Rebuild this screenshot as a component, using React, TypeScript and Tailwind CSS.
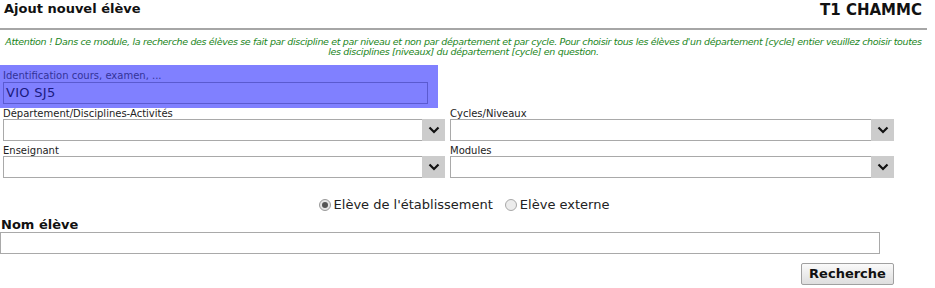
import React from "react";

function Chevron() {
  return (
    <svg width="12" height="8" viewBox="0 0 12 8" className="block">
      <path d="M1.5 1.5 L6 6 L10.5 1.5" fill="none" stroke="#111" strokeWidth="2.2" />
    </svg>
  );
}

function SelectBox({ label }: { label: string }) {
  return (
    <div className="flex flex-col">
      <span className="h-[11px] text-[10px] leading-[11px] text-[#222]">{label}</span>
      <div className="flex h-[22px] border border-r-0 border-[#a9a9a9] bg-white">
        <div className="flex-1" />
        <div className="-my-px flex w-[23px] items-center justify-center bg-[#cccccc]">
          <Chevron />
        </div>
      </div>
    </div>
  );
}

export default function App() {
  return (
    <div className="h-[288px] w-[935px] bg-white font-['DejaVu_Sans',sans-serif] text-[#111]">
      <div className="w-[927px]">
        {/* header */}
        <div className="flex h-[28px] items-start justify-between">
          <h1 className="pl-[4px] pt-[1px] text-[13px] font-bold leading-[16px]">Ajout nouvel élève</h1>
          <span className="pr-[5px] pt-[2px] text-[15px] font-bold leading-[17px]">T1 CHAMMC</span>
        </div>
        <div className="h-[2px] bg-[#a6a6a6]" />

        {/* notice */}
        <p className="mt-[7px] text-center text-[9.5px] italic leading-[10px] tracking-[-0.34px] text-[#1c861c]">
          Attention ! Dans ce module, la recherche des élèves se fait par discipline et par niveau et non par département et par cycle. Pour choisir tous les élèves d'un département [cycle] entier veuillez choisir toutes les disciplines [niveaux] du département [cycle] en question.
        </p>

        {/* identification */}
        <div className="mt-[8px] h-[43px] w-[438px] bg-[#8080ff] pl-[3px] pt-[5px]">
          <div className="text-[10px] leading-[12px] text-[#333399]">Identification cours, examen, ...</div>
          <div className="h-[22px] w-[425px] border border-[#5a5ad0] pl-[2px] text-[13px] leading-[20px] tracking-[0.3px] text-[#1a1a80]">
            VIO SJ5
          </div>
        </div>

        {/* selects */}
        <div className="grid w-[894px] grid-cols-[442px_444px] gap-x-[5px] gap-y-[4px] pl-[3px]">
          <SelectBox label="Département/Disciplines-Activités" />
          <SelectBox label="Cycles/Niveaux" />
          <SelectBox label="Enseignant" />
          <SelectBox label="Modules" />
        </div>

        {/* radios */}
        <div className="mt-[19px] flex items-center justify-center gap-[4px] pl-[1px] text-[13px] leading-[16px] text-[#222]">
          <label className="flex items-center gap-[3px]">
            <span className="flex h-[12px] w-[12px] items-center justify-center rounded-full border border-[#9a9a9a] bg-[#e6e6e6]">
              <span className="h-[6px] w-[6px] rounded-full bg-[#555]" />
            </span>
            Elève de l'établissement
          </label>
          <label className="ml-[8px] flex items-center gap-[3px]">
            <span className="h-[12px] w-[12px] rounded-full border border-[#a8a8a8] bg-[#ececec]" />
            Elève externe
          </label>
        </div>

        {/* nom eleve */}
        <div className="mt-[4px] pl-[1px] text-[13px] font-bold leading-[15px]">Nom élève</div>
        <div className="h-[22px] w-[880px] border border-[#a9a9a9] bg-white" />

        <div className="mt-[9px] flex w-[894px] justify-end">
          <button className="h-[22px] w-[93px] rounded-[2px] border border-[#a0a0a0] bg-gradient-to-b from-[#fafafa] to-[#dedede] text-[13px] font-bold leading-[18px] text-[#111]">
            Recherche
          </button>
        </div>
      </div>
    </div>
  );
}
